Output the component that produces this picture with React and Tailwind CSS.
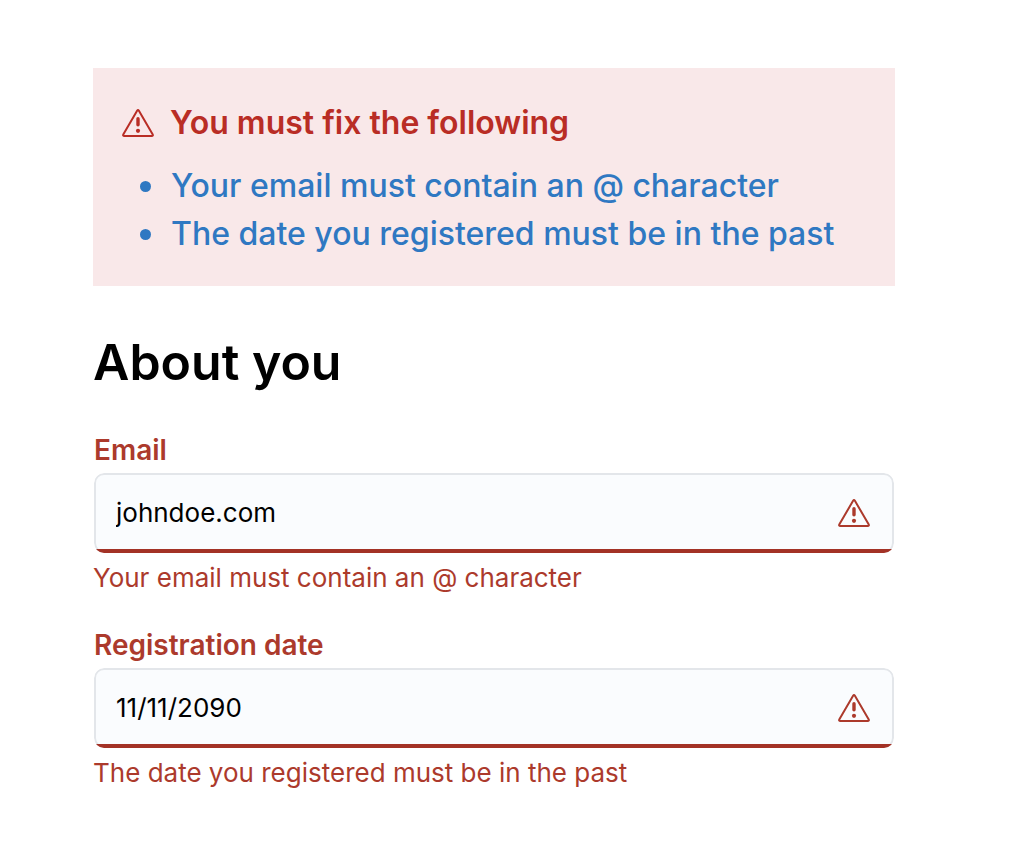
import React from "react";

function WarningIcon({ className }) {
  return (
    <svg viewBox="0 0 32 28" className={className} fill="none" stroke="currentColor" strokeWidth="2" strokeLinejoin="round" aria-hidden="true">
      <path d="M15.1 1.8Q16 .4 16.9 1.8L30.6 25.2Q31.5 27 29.6 27H2.4Q.5 27 1.4 25.2Z" />
      <path d="M16 9.8v6" strokeWidth="3.4" strokeLinecap="round" />
      <circle cx="16" cy="21.8" r="2.1" fill="currentColor" stroke="none" />
    </svg>
  );
}

function SummaryItem({ href, children }) {
  return (
    <li className="flex items-center gap-5">
      <span className="size-[11px] shrink-0 rounded-full bg-current" aria-hidden="true" />
      <a href={href}>{children}</a>
    </li>
  );
}

function Field({ id, label, value, error }) {
  return (
    <div className="flex flex-col">
      <label htmlFor={id} className="px-px text-[28px] leading-10 font-semibold">{label}</label>
      <div className="relative mx-px mt-[3px] overflow-hidden rounded-[10px] after:absolute after:inset-x-0 after:bottom-0 after:h-1 after:bg-[#a33226]">
        <input
          id={id}
          type="text"
          defaultValue={value}
          aria-invalid="true"
          aria-describedby={id + "-error"}
          className="block h-20 w-full rounded-[10px] border-2 border-[#e3e6ea] bg-[#fafcfe] pr-16 pb-0.5 pl-5 text-[26px] font-normal text-black outline-none"
        />
        <WarningIcon className="pointer-events-none absolute top-[26px] right-6 h-7 w-8" />
      </div>
      <p id={id + "-error"} className="mt-[5px] text-[26px] leading-10 font-normal">{error}</p>
    </div>
  );
}

export default function App() {
  return (
    <main className="bg-white pt-17 pr-[130px] pb-16 pl-[93px] font-['Inter',sans-serif] text-[#ac3a2c]">
      <section className="bg-[#f9e8e9] px-[29px] pt-8 pb-7">
        <h2 className="flex items-center gap-4 text-[32px] leading-[46px] font-semibold text-[#b92d25]">
          <WarningIcon className="h-7 w-8" />
          You must fix the following
        </h2>
        <ul className="mt-4 pl-[18px] text-[32px] leading-[48px] font-medium text-[#2f78c2]">
          <SummaryItem href="#email">Your email must contain an @ character</SummaryItem>
          <SummaryItem href="#registered">The date you registered must be in the past</SummaryItem>
        </ul>
      </section>
      <h1 className="mt-11 text-[50px] leading-16 font-semibold text-black">About you</h1>
      <form className="mt-9 flex flex-col gap-[27px]">
        <Field id="email" label="Email" value="johndoe.com" error="Your email must contain an @ character" />
        <Field id="registered" label="Registration date" value="11/11/2090" error="The date you registered must be in the past" />
      </form>
    </main>
  );
}
